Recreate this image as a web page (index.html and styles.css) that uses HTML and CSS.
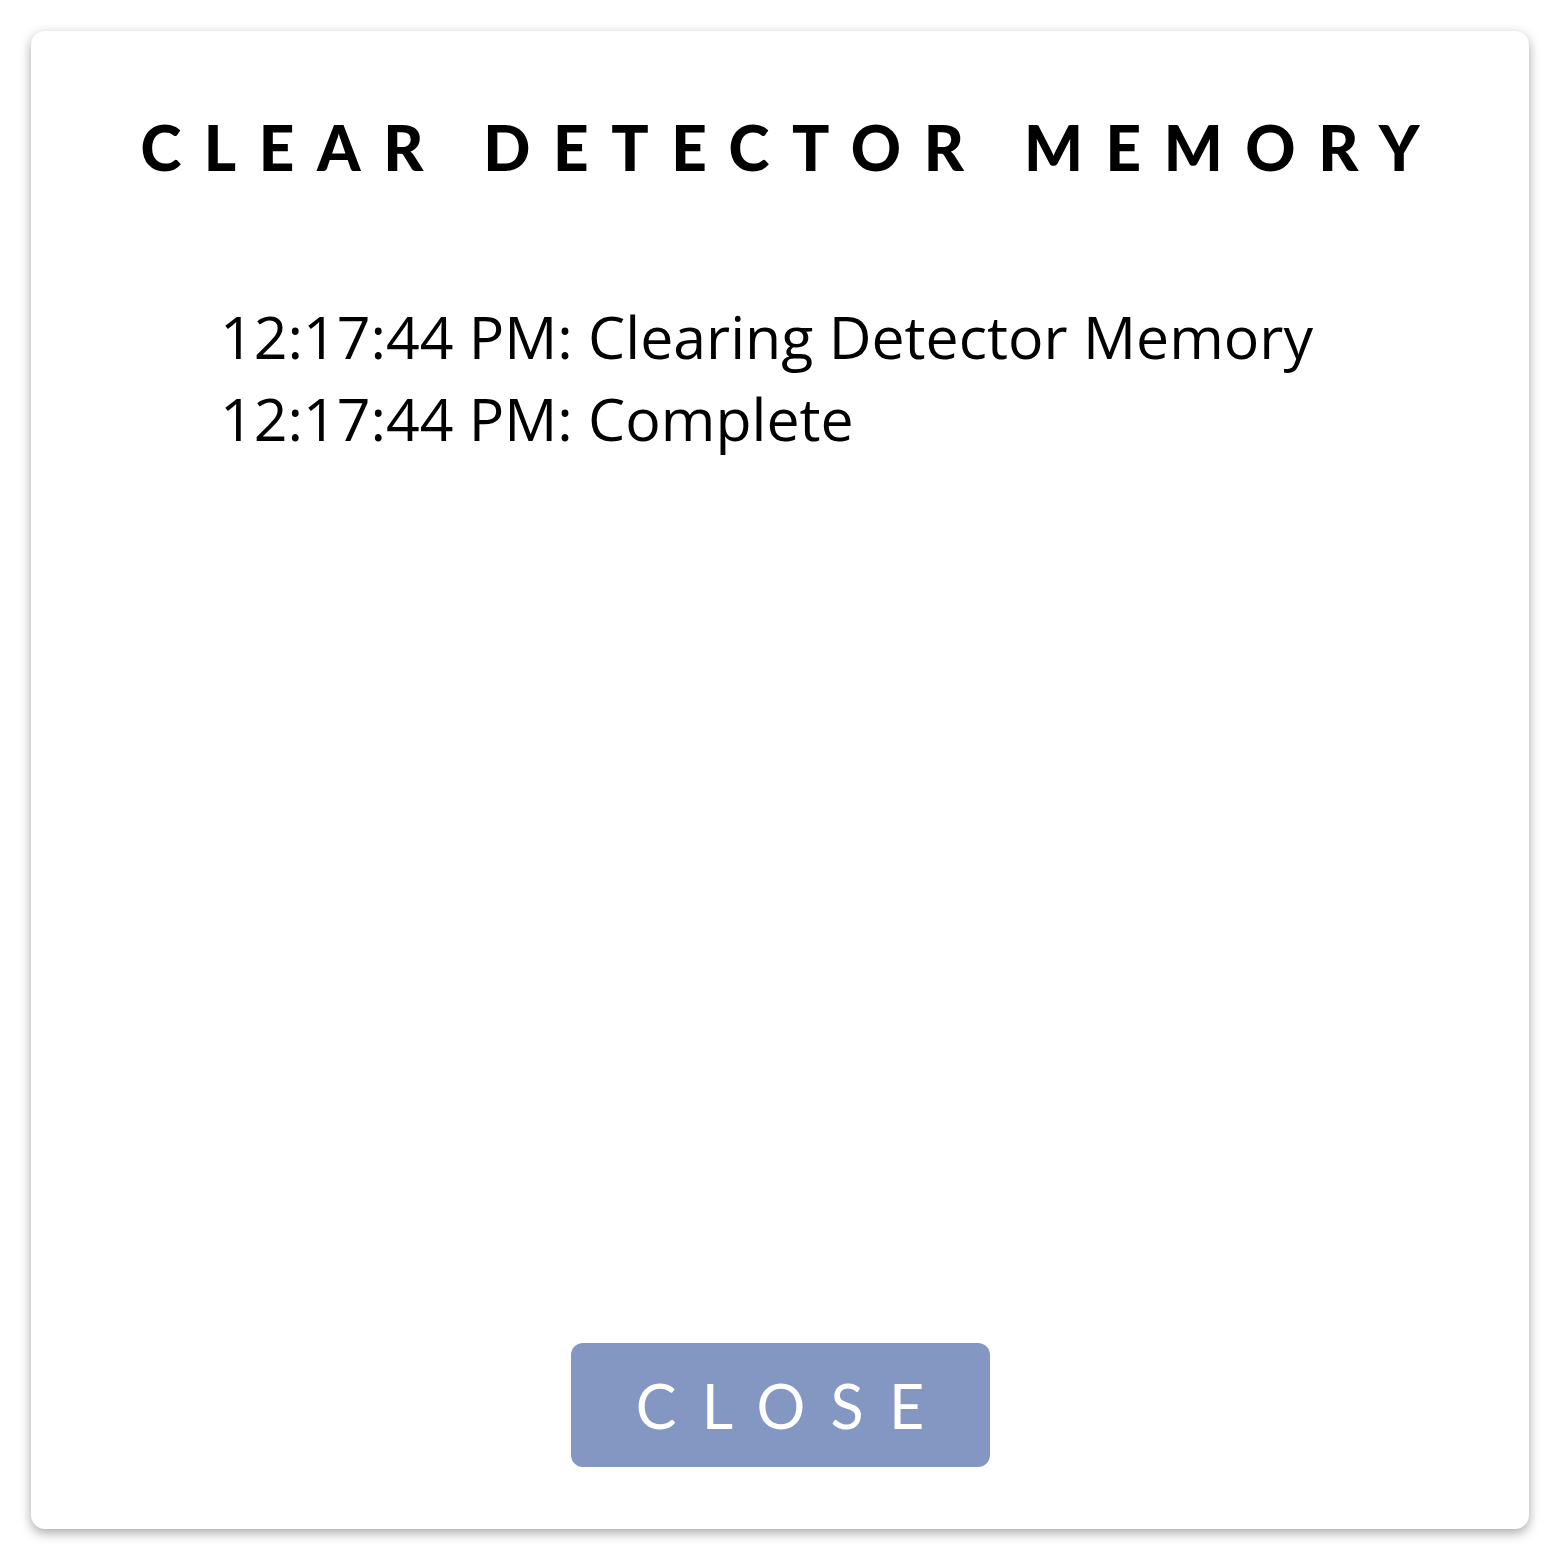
FILE: index.html
```html
<!DOCTYPE html>
<html>
<head>
<meta charset="utf-8">
<link rel="stylesheet" href="styles.css">
</head>
<body>
<div class="dialog">
  <h1 class="title">CLEAR DETECTOR MEMORY</h1>
  <div class="log">
    <div class="line">12:17:44 PM: Clearing Detector Memory</div>
    <div class="line">12:17:44 PM: Complete</div>
  </div>
  <div class="actions">
    <button class="close">CLOSE</button>
  </div>
</div>
</body>
</html>
```
FILE: styles.css
```css
html, body {
  margin: 0;
  padding: 0;
  background: #ffffff;
}
body {
  width: 1562px;
  height: 1562px;
  padding: 31px;
  box-sizing: border-box;
}
.dialog {
  width: 1498px;
  height: 1498px;
  box-sizing: border-box;
  background: #fff;
  border-radius: 14px;
  box-shadow: 0 4px 12px rgba(0,0,0,0.35);
  display: flex;
  flex-direction: column;
  align-items: center;
}
.title {
  margin: 85px 0 0 0;
  font-family: "Lato", "Liberation Sans", sans-serif;
  font-weight: 900;
  font-size: 62px;
  line-height: 1;
  letter-spacing: 22.6px;
  white-space: nowrap;
  color: #000;
  padding-left: 22.6px;
}
.log {
  align-self: stretch;
  padding: 117px 0 0 189px;
  font-family: "Open Sans", "Noto Sans", sans-serif;
  font-size: 59px;
  line-height: 82px;
  color: #000;
  flex: 1;
}
.actions {
  padding-bottom: 62px;
}
.close {
  width: 419px;
  height: 124px;
  background: #8497c2;
  border: none;
  border-radius: 12px;
  color: #fff;
  font-family: "Lato", "Liberation Sans", sans-serif;
  font-weight: 400;
  font-size: 61px;
  letter-spacing: 25.3px;
  padding: 0 0 0 25.3px;
}
```
